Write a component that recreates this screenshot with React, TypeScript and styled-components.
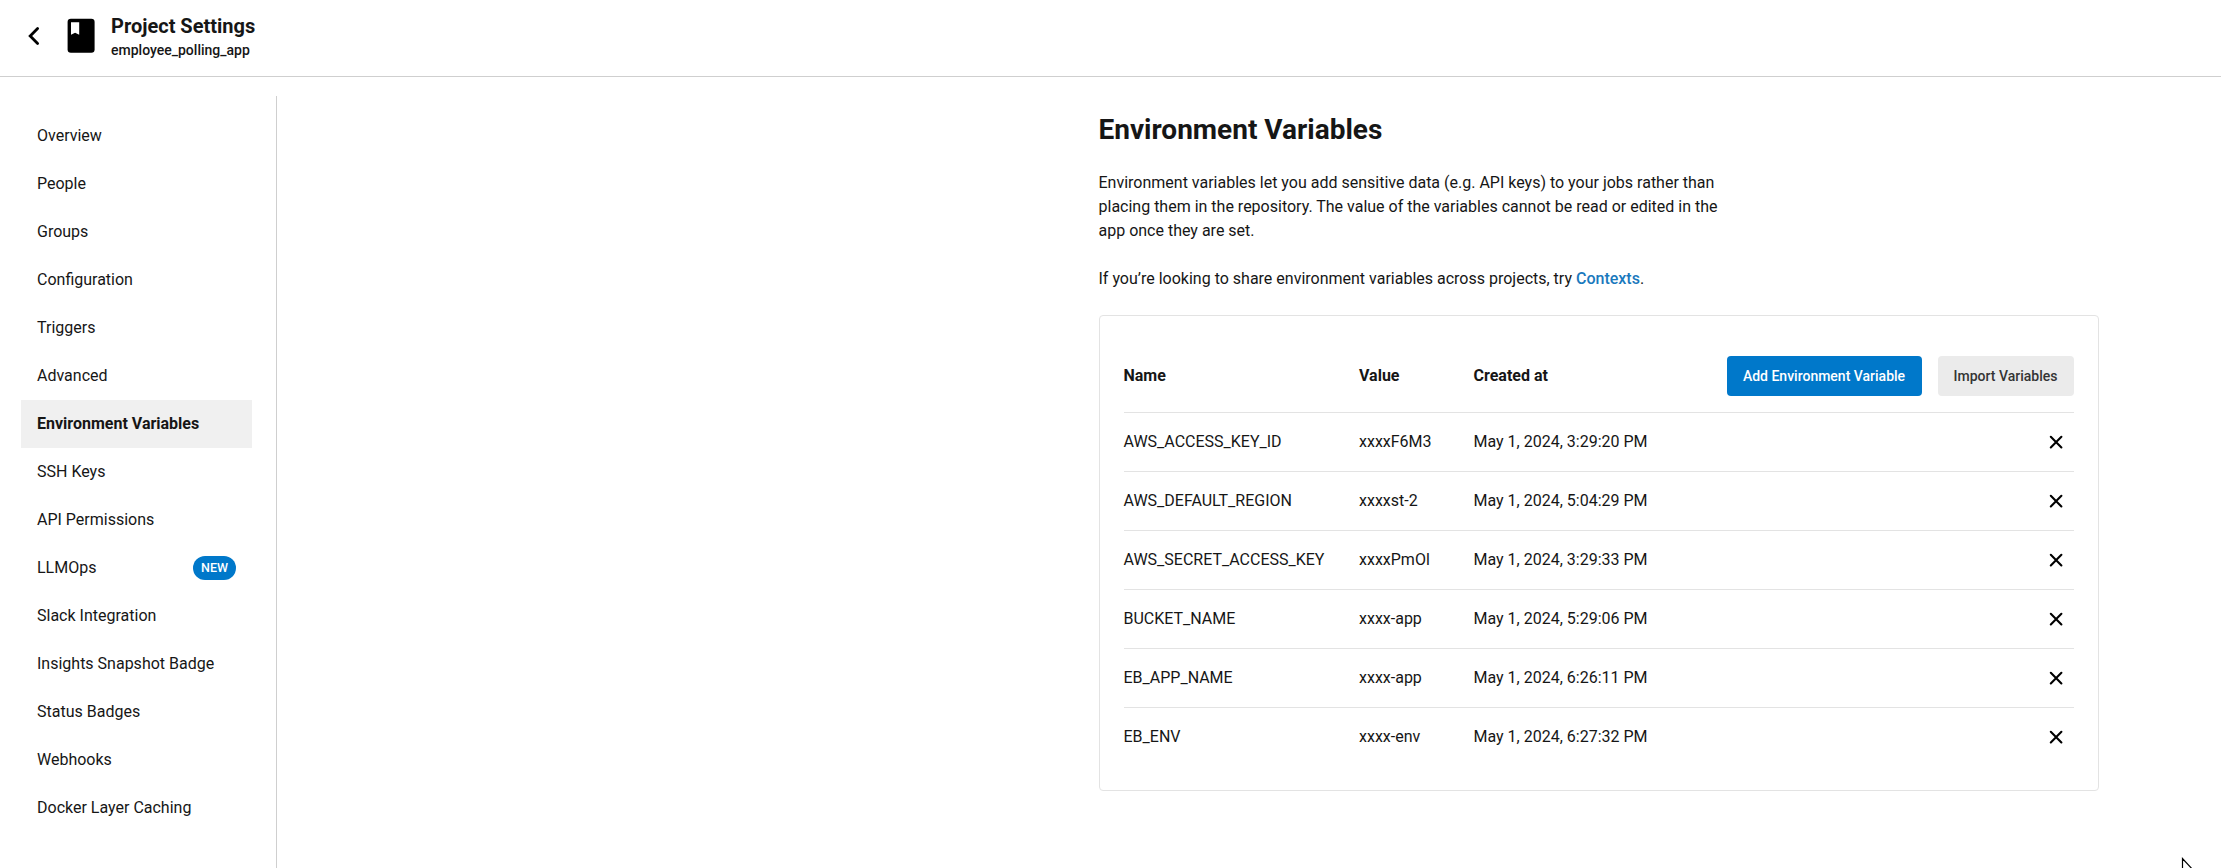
import React from "react";
import styled, { createGlobalStyle } from "styled-components";

const GlobalStyle = createGlobalStyle`
  *, *::before, *::after { box-sizing: border-box; }
  body {
    margin: 0;
    background: #fff;
    color: #161616;
    font-family: Roboto, "Liberation Sans", sans-serif;
    font-size: 16px;
    line-height: 24px;
  }
  h1, h2, p { margin: 0; }
`;

const Page = styled.div`
  display: flex;
  flex-direction: column;
  height: 868px;
  overflow: hidden;
  position: relative;
`;

const Header = styled.header`
  display: flex;
  align-items: center;
  flex: none;
  height: 77px;
  padding: 0 0 4px 21px;
  border-bottom: 1px solid #cfcfcf;
`;

const BackButton = styled.button`
  display: flex;
  border: 0;
  padding: 0;
  background: none;
  width: 24px;
  height: 24px;
  margin-right: 19px;
`;

const ProjectIcon = styled.svg`
  width: 34px;
  height: 40px;
  margin-right: 13px;
`;

const HeaderText = styled.div`
  display: flex;
  flex-direction: column;
  padding-top: 2px;
`;

const PageTitle = styled.h1`
  font-size: 20px;
  line-height: 24px;
  font-weight: 700;
`;

const ProjectName = styled.span`
  font-size: 14px;
  line-height: 20px;
  font-weight: 500;
  margin-top: 2px;
`;

const Body = styled.div`
  display: flex;
  flex: 1;
  min-height: 0;
`;

const Sidebar = styled.nav`
  width: 277px;
  flex: none;
  margin-top: 19px;
  padding: 16px 24px 0 21px;
  border-right: 1px solid #cfcfcf;
`;

const NavItem = styled.a<{ $active?: boolean }>`
  display: flex;
  align-items: center;
  justify-content: space-between;
  height: 48px;
  padding: 0 16px;
  background: ${(p) => (p.$active ? "#f0f0f0" : "transparent")};
  font-weight: ${(p) => (p.$active ? 700 : 400)};
`;

const Badge = styled.span`
  width: 43px;
  height: 24px;
  border-radius: 12px;
  background: #0078ca;
  color: #fff;
  font-size: 12.5px;
  font-weight: 500;
  text-align: center;
`;

const Main = styled.main`
  width: 1000px;
  margin-left: 821.5px;
  padding-top: 37px;
`;

const Title = styled.h2`
  font-size: 28px;
  line-height: 32px;
  font-weight: 700;
`;

const Intro = styled.p`
  width: 640px;
  margin-top: 25px;
`;

const Link = styled.a`
  color: #1a79bd;
  font-weight: 500;
`;

const Card = styled.section`
  margin-top: 24px;
  padding: 24px;
  border: 1px solid #e3e3e3;
  border-radius: 4px;
`;

const Row = styled.div`
  display: grid;
  grid-template-columns: 235.5px 114.5px 1fr auto;
  align-items: center;
  height: 59px;
  border-bottom: 1px solid #e3e3e3;

  &:last-child {
    height: 58px;
    border-bottom: 0;
  }
`;

const HeadRow = styled(Row)`
  height: 73px;
  font-weight: 700;
`;

const Actions = styled.div`
  display: flex;
  gap: 16px;
`;

const Button = styled.button<{ $primary?: boolean }>`
  width: ${(p) => (p.$primary ? 195 : 136)}px;
  height: 40px;
  padding: 0;
  border: 0;
  border-radius: 4px;
  font: 500 14px/20px Roboto, "Liberation Sans", sans-serif;
  color: ${(p) => (p.$primary ? "#fff" : "#343434")};
  background: ${(p) => (p.$primary ? "#0078ca" : "#ebebeb")};
`;

const RemoveButton = styled.button`
  display: flex;
  width: 24px;
  height: 24px;
  margin-right: 6px;
  padding: 0;
  border: 0;
  background: none;
`;

const Cursor = styled.svg`
  position: absolute;
  left: 2181px;
  top: 857px;
  width: 14px;
  height: 20px;
`;

const navItems = [
  "Overview",
  "People",
  "Groups",
  "Configuration",
  "Triggers",
  "Advanced",
  "Environment Variables",
  "SSH Keys",
  "API Permissions",
  "LLMOps",
  "Slack Integration",
  "Insights Snapshot Badge",
  "Status Badges",
  "Webhooks",
  "Docker Layer Caching",
];

const variables = [
  ["AWS_ACCESS_KEY_ID", "xxxxF6M3", "May 1, 2024, 3:29:20 PM"],
  ["AWS_DEFAULT_REGION", "xxxxst-2", "May 1, 2024, 5:04:29 PM"],
  ["AWS_SECRET_ACCESS_KEY", "xxxxPmOl", "May 1, 2024, 3:29:33 PM"],
  ["BUCKET_NAME", "xxxx-app", "May 1, 2024, 5:29:06 PM"],
  ["EB_APP_NAME", "xxxx-app", "May 1, 2024, 6:26:11 PM"],
  ["EB_ENV", "xxxx-env", "May 1, 2024, 6:27:32 PM"],
];

export default function App() {
  return (
    <Page>
      <GlobalStyle />
      <Header>
        <BackButton aria-label="Back">
          <svg width="24" height="24" viewBox="0 0 24 24" fill="none" stroke="#000" strokeWidth="2.8">
            <path d="M16.6 4.6 9.2 12l7.4 7.4" strokeLinecap="round" />
          </svg>
        </BackButton>
        <ProjectIcon viewBox="0 0 34 40">
          <rect x="3.6" y="2.7" width="27" height="34" rx="3.3" />
          <path d="M7 6.2h8.2v12.6L11.1 16.7 7 18.8z" fill="#fff" />
        </ProjectIcon>
        <HeaderText>
          <PageTitle>Project Settings</PageTitle>
          <ProjectName>employee_polling_app</ProjectName>
        </HeaderText>
      </Header>
      <Body>
        <Sidebar>
          {navItems.map((item) => (
            <NavItem key={item} $active={item === "Environment Variables"}>
              {item}
              {item === "LLMOps" && <Badge>NEW</Badge>}
            </NavItem>
          ))}
        </Sidebar>
        <Main>
          <Title>Environment Variables</Title>
          <Intro>
            Environment variables let you add sensitive data (e.g. API keys) to your jobs rather than placing them in
            the repository. The value of the variables cannot be read or edited in the app once they are set.
            <br />
            <br />
            If you’re looking to share environment variables across projects, try <Link>Contexts</Link>.
          </Intro>
          <Card>
            <HeadRow>
              <span>Name</span>
              <span>Value</span>
              <span>Created at</span>
              <Actions>
                <Button $primary>Add Environment Variable</Button>
                <Button>Import Variables</Button>
              </Actions>
            </HeadRow>
            {variables.map(([name, value, created]) => (
              <Row key={name}>
                <span>{name}</span>
                <span>{value}</span>
                <span>{created}</span>
                <RemoveButton aria-label="Remove">
                  <svg width="24" height="24" viewBox="0 0 24 24" stroke="#000" strokeWidth="2.1">
                    <path d="m6.8 6.8 10.6 10.6M17.4 6.8 6.8 17.4" strokeLinecap="round" />
                  </svg>
                </RemoveButton>
              </Row>
            ))}
          </Card>
        </Main>
      </Body>
      <Cursor viewBox="0 0 14 20">
        <path d="M1.5 1.5v15l3.5-3.2 2.2 5 2-1-2.2-4.6h4.8z" fill="#fff" stroke="#000" strokeWidth="1.2" />
      </Cursor>
    </Page>
  );
}
